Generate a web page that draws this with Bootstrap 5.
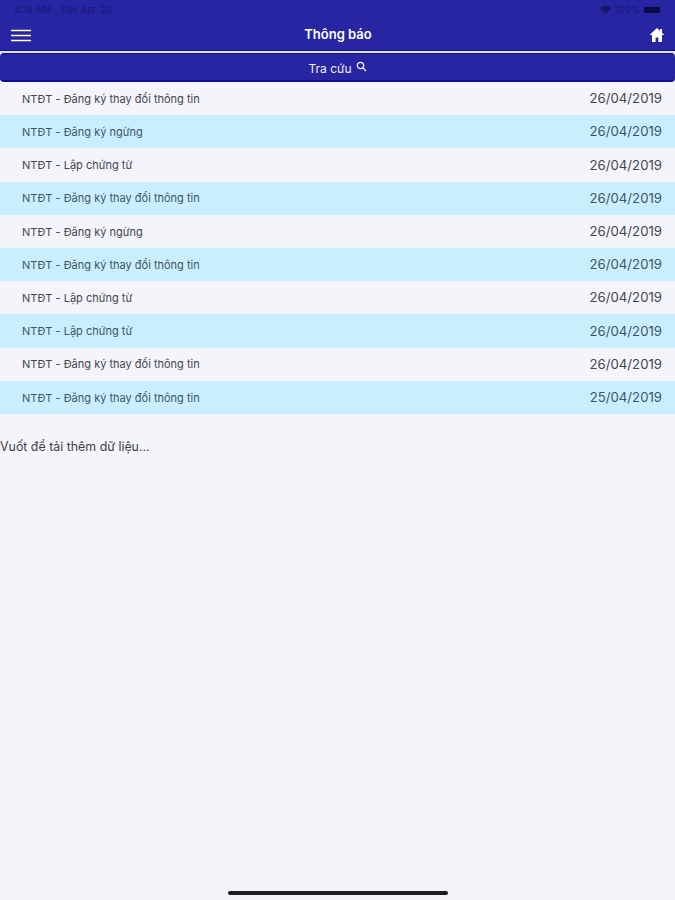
<!DOCTYPE html>
<html lang="vi">
<head>
    <meta charset="UTF-8">
    <meta name="viewport" content="width=device-width, initial-scale=1">
    <title>Thông báo</title>
    <link href="https://cdn.jsdelivr.net/npm/bootstrap@5.3.0/dist/css/bootstrap.min.css" rel="stylesheet">
    <style>
        body { background: #f3f5fb; height: 900px; overflow: hidden; font-family: "Inter", "Liberation Sans", sans-serif; color: #3a3a3c; position: relative; }
        .app-head { background: #2725a1; height: 51px; border-bottom: 1px solid #10108f; }
        .status-bar { height: 20px; padding: 0 15px 0 14px; font-size: 9.5px; color: #17177a; }
        .status-time { word-spacing: .6px; }
        .title-bar { height: 30px; padding: 0 10px 0 11px; color: #fff; }
        .title-text { font-size: 13px; font-weight: 600; }
        .home-icon { margin-left: 4px; }
        .head-line { height: 2px; background: #dfe0f3; }
        .search-btn { background: #2725a1; color: #f1f1fb; height: 29px; border-radius: 4px; border-bottom: 2px solid #10108f; border-top: 1px solid #10108f; font-size: 12px; padding-top: 3px; }
        .notice-row { height: 33.2px; padding: 0 13px 0 22px; }
        .notice-row:nth-child(even) { background: #c9effe; }
        .notice-row:nth-child(even) span { color: #3f5566; }
        .notice-name { font-size: 11px; color: #44464d; padding-top: 1px; }
        .notice-date { font-size: 13.2px; color: #45464a; padding-top: 1px; }
        .more-text { font-size: 12.4px; margin-top: 24px; color: #3f3f42; }
        .home-bar { position: absolute; left: 228px; bottom: 5px; width: 220px; height: 4px; border-radius: 2px; background: #1c1c1e; }
    </style>
</head>
<body>
    <div class="app-head">
        <div class="status-bar d-flex justify-content-between align-items-center">
            <span class="status-time">4:19 AM &nbsp; Tue Apr 20</span>
            <span class="d-flex align-items-center gap-1">
                <svg width="11" height="8" viewBox="0 0 11 8"><path d="M0 2.2C3 -.6 8 -.6 11 2.2L5.5 8Z" fill="#15156b"/></svg>
                <span>100%</span>
                <svg width="16" height="6" viewBox="0 0 16 6"><rect width="16" height="6" rx="1" fill="#0a0a45"/></svg>
            </span>
        </div>
        <div class="title-bar d-flex justify-content-between align-items-center">
            <svg width="20" height="13" viewBox="0 0 20 13"><path d="M0 1.5H20M0 6.5H20M0 11.5H20" stroke="#fff" stroke-width="1.6"/></svg>
            <span class="title-text">Thông báo</span>
            <svg class="home-icon" width="16" height="16" viewBox="0 0 16 16"><path d="M8 1 .5 8H3v7h3.6v-4.5h2.8V15H13V8h2.500L13 5.700V2h-2v1.800Z" fill="#fff"/></svg>
        </div>
    </div>
    <div class="head-line"></div>
    <div class="search-btn d-flex justify-content-center align-items-center gap-1">
        <span>Tra cứu</span>
        <svg class="mb-1" width="11" height="11" viewBox="0 0 11 11" fill="none" stroke="#f1f1fb" stroke-width="1.300"><circle cx="4.500" cy="4.500" r="3.200"/><path d="M7 7l3 3"/></svg>
    </div>
    <div>
        <div class="notice-row d-flex justify-content-between align-items-center"><span class="notice-name">NTĐT - Đăng ký thay đổi thông tin</span><span class="notice-date">26/04/2019</span></div>
        <div class="notice-row d-flex justify-content-between align-items-center"><span class="notice-name">NTĐT - Đăng ký ngừng</span><span class="notice-date">26/04/2019</span></div>
        <div class="notice-row d-flex justify-content-between align-items-center"><span class="notice-name">NTĐT - Lập chứng từ</span><span class="notice-date">26/04/2019</span></div>
        <div class="notice-row d-flex justify-content-between align-items-center"><span class="notice-name">NTĐT - Đăng ký thay đổi thông tin</span><span class="notice-date">26/04/2019</span></div>
        <div class="notice-row d-flex justify-content-between align-items-center"><span class="notice-name">NTĐT - Đăng ký ngừng</span><span class="notice-date">26/04/2019</span></div>
        <div class="notice-row d-flex justify-content-between align-items-center"><span class="notice-name">NTĐT - Đăng ký thay đổi thông tin</span><span class="notice-date">26/04/2019</span></div>
        <div class="notice-row d-flex justify-content-between align-items-center"><span class="notice-name">NTĐT - Lập chứng từ</span><span class="notice-date">26/04/2019</span></div>
        <div class="notice-row d-flex justify-content-between align-items-center"><span class="notice-name">NTĐT - Lập chứng từ</span><span class="notice-date">26/04/2019</span></div>
        <div class="notice-row d-flex justify-content-between align-items-center"><span class="notice-name">NTĐT - Đăng ký thay đổi thông tin</span><span class="notice-date">26/04/2019</span></div>
        <div class="notice-row d-flex justify-content-between align-items-center"><span class="notice-name">NTĐT - Đăng ký thay đổi thông tin</span><span class="notice-date">25/04/2019</span></div>
    </div>
    <div class="more-text">Vuốt để tải thêm dữ liệu...</div>
    <div class="home-bar"></div>
    <script src="https://cdn.jsdelivr.net/npm/bootstrap@5.3.0/dist/js/bootstrap.bundle.min.js"></script>
</body>
</html>
